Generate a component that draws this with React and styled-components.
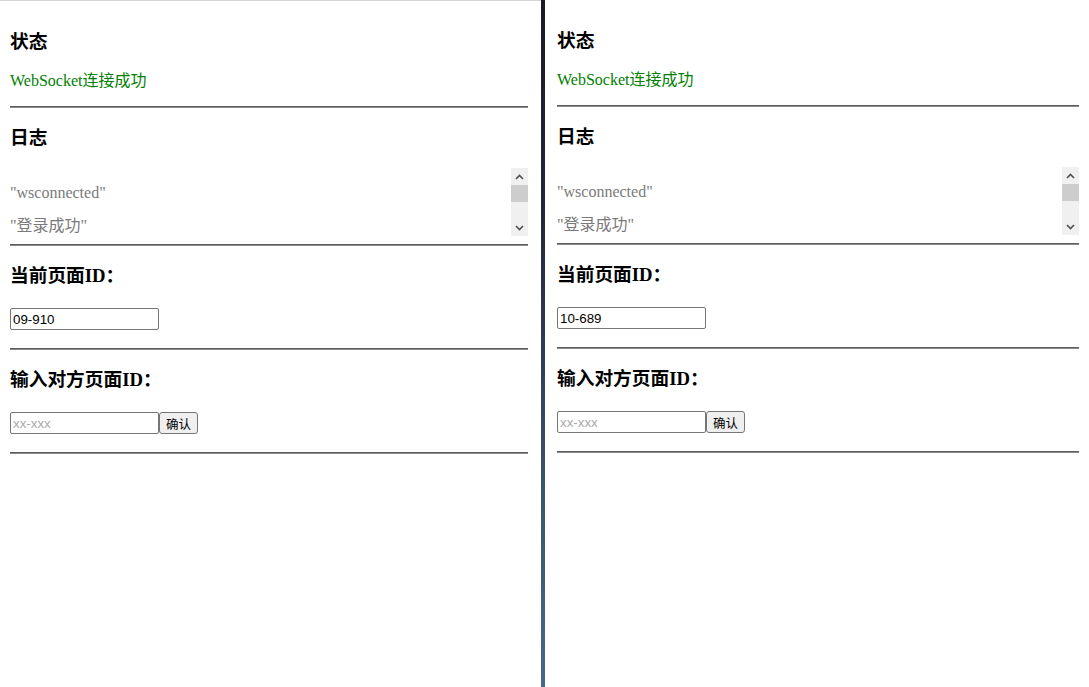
import React from 'react'
import styled, { createGlobalStyle } from 'styled-components'

const Global = createGlobalStyle`
  html, body {
    margin: 0;
    padding: 0;
    background: #fff;
  }
  body {
    font-family: "Liberation Serif", "Noto Sans CJK SC", serif;
    font-size: 16px;
  }
`

const Screen = styled.div`
  display: flex;
  height: 687px;
  overflow: hidden;
`

const Pane = styled.div`
  width: ${p => p.$width}px;
  flex-shrink: 0;
  box-sizing: border-box;
  padding: 11px ${p => p.$right}px 0 ${p => p.$left}px;
  border-top: ${p => (p.$border ? '1px solid #d4d4d4' : 'none')};
`

const Divider = styled.div`
  width: 4px;
  flex-shrink: 0;
  background: linear-gradient(to bottom, #1b1b27 0%, #23253a 30%, #3a5370 70%, #4a6886 100%);
`

const Heading = styled.h3`
  margin: 19px 0;
  font-size: 18.72px;
  line-height: 22px;
  font-weight: bold;
  color: #000;
`

const StatusText = styled.p`
  margin: 19px 0 16px;
  line-height: 18px;
  color: #008000;
`

const Rule = styled.hr`
  margin: 8px 0;
  height: 0;
  border: none;
  border-top: 1px solid #5c5c5c;
  border-bottom: 1px solid #8a8a8a;
`

const LogBox = styled.div`
  display: flex;
  height: 68px;
`

const LogList = styled.div`
  flex: 1;
  overflow: hidden;
`

const LogItem = styled.p`
  margin: 16px 0;
  line-height: 17px;
  color: #7a7a7a;
`

const ScrollBar = styled.div`
  width: 17px;
  display: flex;
  flex-direction: column;
  background: #f0f0f0;
`

const ScrollArrow = styled.div`
  height: 17px;
  display: flex;
  align-items: center;
  justify-content: center;
`

const ScrollThumb = styled.div`
  height: 17px;
  background: #cdcdcd;
`

const ScrollRest = styled.div`
  flex: 1;
`

const FieldRow = styled.div`
  display: flex;
  margin: 21px 0 18px;
`

const IdInput = styled.input`
  width: 149px;
  height: 22px;
  box-sizing: border-box;
  margin: 0;
  padding: 1px 2px;
  border: 1px solid #767676;
  border-radius: 2px;
  font-family: "Liberation Sans", "Noto Sans CJK SC", sans-serif;
  font-size: 13.33px;
  color: #000;
  &::placeholder {
    color: #a9a9a9;
  }
`

const ConfirmButton = styled.button`
  width: 39px;
  height: 22px;
  box-sizing: border-box;
  margin: 0;
  padding: 0;
  border: 1px solid #767676;
  border-radius: 3px;
  background: #efefef;
  font-family: "Noto Sans CJK SC", sans-serif;
  font-size: 12.5px;
  color: #000;
`

const Chevron = ({ up }) => (
  <svg width="9" height="6" viewBox="0 0 9 6">
    <path
      d={up ? 'M1 5 L4.5 1.5 L8 5' : 'M1 1 L4.5 4.5 L8 1'}
      fill="none"
      stroke="#505050"
      strokeWidth="1.6"
    />
  </svg>
)

const Page = ({ pageId, width, left, right, border }) => (
  <Pane $width={width} $left={left} $right={right} $border={border}>
    <Heading>状态</Heading>
    <StatusText>WebSocket连接成功</StatusText>
    <Rule />
    <Heading>日志</Heading>
    <LogBox>
      <LogList>
        <LogItem>"wsconnected"</LogItem>
        <LogItem>"登录成功"</LogItem>
      </LogList>
      <ScrollBar>
        <ScrollArrow><Chevron up /></ScrollArrow>
        <ScrollThumb />
        <ScrollRest />
        <ScrollArrow><Chevron /></ScrollArrow>
      </ScrollBar>
    </LogBox>
    <Rule />
    <Heading>当前页面ID：</Heading>
    <FieldRow>
      <IdInput defaultValue={pageId} readOnly />
    </FieldRow>
    <Rule />
    <Heading>输入对方页面ID：</Heading>
    <FieldRow>
      <IdInput placeholder="xx-xxx" />
      <ConfirmButton>确认</ConfirmButton>
    </FieldRow>
    <Rule />
  </Pane>
)

const App = () => (
  <>
    <Global />
    <Screen>
      <Page pageId="09-910" width={541} left={10} right={13} border />
      <Divider />
      <Page pageId="10-689" width={544} left={12} right={10} />
    </Screen>
  </>
)

export default App
